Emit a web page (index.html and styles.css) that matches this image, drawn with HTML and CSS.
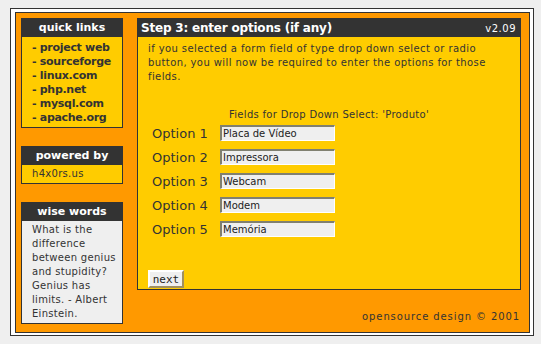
FILE: index.html
```html
<!DOCTYPE html>
<html lang="en">

<head>
    <meta charset="UTF-8">
    <title>Step 3: enter options</title>
    <link rel="stylesheet" href="styles.css">
</head>

<body>
    <div id="frame">
        <div id="wrap">
            <div id="side">
                <div class="box">
                    <p class="box_title">quick links</p>
                    <ul class="links">
                        <li>- project web</li>
                        <li>- sourceforge</li>
                        <li>- linux.com</li>
                        <li>- php.net</li>
                        <li>- mysql.com</li>
                        <li>- apache.org</li>
                    </ul>
                </div>
                <div class="box">
                    <p class="box_title">powered by</p>
                    <p class="box_txt">h4x0rs.us</p>
                </div>
                <div class="box box_grey">
                    <p class="box_title">wise words</p>
                    <p class="box_txt">What is the difference between genius and stupidity? Genius has limits. - Albert Einstein.</p>
                </div>
            </div>
            <div id="main">
                <div id="panel">
                    <div id="panel_top">
                        <span class="step">Step 3: enter options (if any)</span>
                        <span class="ver">v2.09</span>
                    </div>
                    <div id="panel_body">
                        <p class="intro">if you selected a form field of type drop down select or radio button, you will now be required to enter the options for those fields.</p>
                        <p class="fields">Fields for Drop Down Select: 'Produto'</p>
                        <div class="opts">
                            <label class="opt"><span>Option 1</span><input type="text" value="Placa de Vídeo"></label>
                            <label class="opt"><span>Option 2</span><input type="text" value="Impressora"></label>
                            <label class="opt"><span>Option 3</span><input type="text" value="Webcam"></label>
                            <label class="opt"><span>Option 4</span><input type="text" value="Modem"></label>
                            <label class="opt"><span>Option 5</span><input type="text" value="Memória"></label>
                        </div>
                        <button id="next">next</button>
                    </div>
                </div>
                <p id="foot">opensource design © 2001</p>
            </div>
        </div>
    </div>
</body>

</html>
```

FILE: styles.css
```css
* {
    margin: 0;
    padding: 0;
}

body {
    background: #efefef;
    padding: 8px 0 0 10px;
    font-family: "DejaVu Sans", Verdana, sans-serif;
    font-size: 10px;
    color: #333;
}

#frame {
    width: 515px;
    height: 320px;
    border: 1px solid #333;
    background: #fff;
    padding: 3px 3px 3px 4px;
}

#wrap {
    height: 304px;
    border: 1px solid #333;
    background: #f90;
    padding: 5px 8px 10px 5px;
    display: flex;
    gap: 14px;
}

#side {
    width: 102px;
    display: flex;
    flex-direction: column;
    gap: 18px;
}

.box {
    border: 1px solid #333;
    background: #fc0;
}

.box_grey {
    background: #efefef;
}

.box_title {
    background: #333;
    color: #fff;
    font-weight: 700;
    font-size: 11px;
    height: 18px;
    line-height: 18px;
    text-align: center;
}

.links {
    list-style: none;
    padding: 4px 0 2px 10px;
    font-weight: 700;
    font-size: 11px;
    line-height: 14px;
    letter-spacing: -0.3px;
}

.box_txt {
    padding: 2px 4px 2px 10px;
    line-height: 14px;
    letter-spacing: 0.3px;
}

#main {
    flex: 1;
    display: flex;
    flex-direction: column;
}

#panel {
    height: 271px;
    border: 1px solid #333;
    background: #fc0;
}

#panel_top {
    background: #333;
    color: #fff;
    height: 18px;
    display: flex;
    justify-content: space-between;
    align-items: center;
    padding: 0 4px 0 3px;
}

.step {
    font-weight: 700;
    font-size: 12px;
    letter-spacing: -0.2px;
}

.ver {
    font-size: 10px;
    letter-spacing: 0.5px;
}

#panel_body {
    padding: 5px 10px 0 10px;
}

.intro {
    line-height: 14px;
    letter-spacing: 0.4px;
}

.fields {
    text-align: center;
    margin-top: 25px;
    letter-spacing: 0.3px;
}

.opts {
    margin-top: 5px;
    padding-left: 4px;
    display: flex;
    flex-direction: column;
    gap: 8px;
}

.opt {
    display: flex;
    align-items: center;
    height: 16px;
}

.opt span {
    width: 68px;
    font-size: 13px;
}

.opt input {
    width: 115px;
    height: 16px;
    box-sizing: border-box;
    background: #efefef;
    border: 1px solid #fff;
    border-top: 2px solid #808070;
    border-left: 2px solid #808070;
    font-family: "DejaVu Sans", Verdana, sans-serif;
    font-size: 10px;
    color: #222;
    padding: 0 1px;
    outline: none;
}

#next {
    margin-top: 33px;
    width: 36px;
    height: 18px;
    background: #efefef;
    border: 2px solid;
    border-color: #fff #a09060 #a09060 #fff;
    font-family: "DejaVu Sans Mono", monospace;
    font-size: 11px;
    color: #222;
}

#foot {
    text-align: right;
    margin-top: 21px;
    padding-right: 1px;
    letter-spacing: 0.9px;
}
```
